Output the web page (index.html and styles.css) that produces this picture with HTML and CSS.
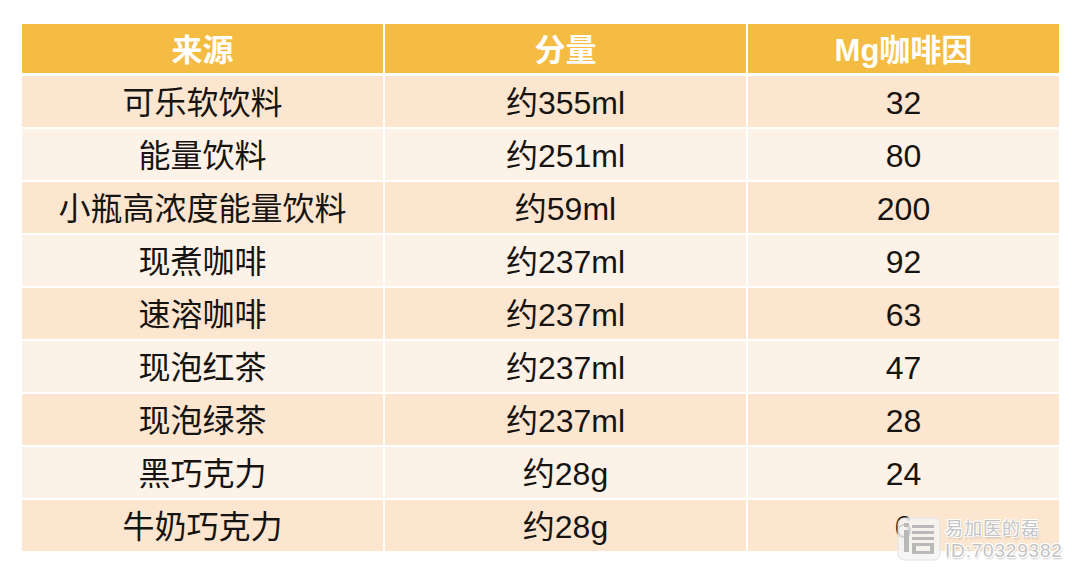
FILE: index.html
```html
<!DOCTYPE html>
<html lang="zh">
<head>
<meta charset="utf-8">
<link rel="stylesheet" href="styles.css">
</head>
<body>
<div class="page">
  <div class="table">
    <div class="cell head">来源</div>
    <div class="cell head">分量</div>
    <div class="cell head">Mg咖啡因</div>

    <div class="cell dark">可乐软饮料</div>
    <div class="cell dark">约355ml</div>
    <div class="cell dark">32</div>

    <div class="cell light">能量饮料</div>
    <div class="cell light">约251ml</div>
    <div class="cell light">80</div>

    <div class="cell dark">小瓶高浓度能量饮料</div>
    <div class="cell dark">约59ml</div>
    <div class="cell dark">200</div>

    <div class="cell light">现煮咖啡</div>
    <div class="cell light">约237ml</div>
    <div class="cell light">92</div>

    <div class="cell dark">速溶咖啡</div>
    <div class="cell dark">约237ml</div>
    <div class="cell dark">63</div>

    <div class="cell light">现泡红茶</div>
    <div class="cell light">约237ml</div>
    <div class="cell light">47</div>

    <div class="cell dark">现泡绿茶</div>
    <div class="cell dark">约237ml</div>
    <div class="cell dark">28</div>

    <div class="cell light">黑巧克力</div>
    <div class="cell light">约28g</div>
    <div class="cell light">24</div>

    <div class="cell dark">牛奶巧克力</div>
    <div class="cell dark">约28g</div>
    <div class="cell dark">6</div>
  </div>

  <div class="watermark">
    <svg class="wm-icon" width="44" height="44" viewBox="0 0 44 44">
      <rect x="1" y="1" width="42" height="42" rx="6" fill="#f4f4f4" fill-opacity="0.85" stroke="#e2e2e2"/>
      <rect x="7" y="13" width="5" height="22" fill="#b9b9b9"/>
      <rect x="7" y="6" width="5" height="4" fill="#b9b9b9"/>
      <rect x="15" y="8" width="22" height="3" fill="#b9b9b9"/>
      <rect x="15" y="14" width="22" height="3" fill="#b9b9b9"/>
      <rect x="15" y="20" width="22" height="3" fill="#b9b9b9"/>
      <rect x="15" y="26" width="4" height="11" fill="#b9b9b9"/>
      <rect x="15" y="26" width="22" height="3" fill="#b9b9b9"/>
      <rect x="33" y="26" width="4" height="11" fill="#b9b9b9"/>
      <rect x="15" y="34" width="22" height="3" fill="#b9b9b9"/>
    </svg>
    <div class="wm-text">
      <div class="wm-name">易加医的磊</div>
      <div class="wm-id">ID:70329382</div>
    </div>
  </div>
</div>
</body>
</html>
```

FILE: styles.css
```css
html, body {
  margin: 0;
  padding: 0;
  background: #ffffff;
}

.page {
  position: relative;
  width: 1080px;
  height: 573px;
  padding: 24px 0 0 22px;
  box-sizing: border-box;
  font-family: "Liberation Sans", "Noto Sans CJK SC", sans-serif;
}

.table {
  display: grid;
  grid-template-columns: 361px 361px 311px;
  grid-template-rows: 50px repeat(9, 51px);
  column-gap: 2px;
  row-gap: 2px;
}

.cell {
  display: flex;
  align-items: center;
  justify-content: center;
  font-size: 32px;
  color: #161412;
  line-height: 1;
  padding-top: 3px;
  box-sizing: border-box;
}

.head {
  background: #f4bc42;
  color: #ffffff;
  font-weight: bold;
  font-size: 31px;
  margin-bottom: 1px;
}

.dark {
  background: #fce6cf;
}

.light {
  background: #fdf2e7;
}

.watermark {
  position: absolute;
  left: 897px;
  top: 516px;
  display: flex;
  align-items: center;
  gap: 4px;
}

.wm-icon {
  display: block;
}

.wm-text {
  display: flex;
  flex-direction: column;
  gap: 3px;
  color: #c4c4c4;
  text-shadow: 1px 1px 0 #ffffff, -1px -1px 0 #ffffff, 1px -1px 0 #ffffff, -1px 1px 0 #ffffff, 1px 2px 2px rgba(0,0,0,0.25);
}

.wm-name {
  font-family: "Noto Sans CJK SC", sans-serif;
  font-size: 18px;
  line-height: 22px;
  letter-spacing: 1px;
}

.wm-id {
  font-family: "Liberation Sans", sans-serif;
  font-size: 19px;
  letter-spacing: 0.8px;
  line-height: 20px;
}
```
